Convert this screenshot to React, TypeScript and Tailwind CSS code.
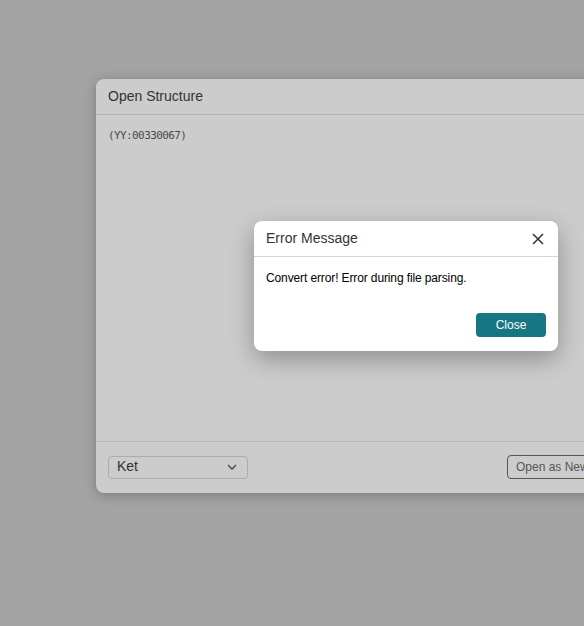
import React from "react";

export default function App() {
  return (
    <div className="relative w-[584px] h-[626px] overflow-hidden bg-[#a3a3a3]" style={{ fontFamily: "'Liberation Sans', Arial, sans-serif" }}>
      {/* Open Structure dialog (dimmed) */}
      <div className="absolute left-[96px] top-[79px] w-[560px] h-[414px] rounded-lg bg-[#cccccc] shadow-[0_2px_12px_rgba(0,0,0,0.25)] flex flex-col">
        <div className="h-[36px] flex items-center px-3 border-b border-[#aeb2b9] text-[14px] text-[#333333]">
          Open Structure
        </div>
        <div className="flex-1 px-3 pt-[13px] text-[11px] tracking-[-0.6px] text-[#4a4a4a]" style={{ fontFamily: "'DejaVu Sans Mono', monospace" }}>
          (YY:00330067)
        </div>
        <div className="h-[52px] border-t border-[#b5b8bd] flex items-center pl-3 pb-[1px]">
          <div className="w-[140px] h-[23px] border border-[#a9acb2] rounded-[4px] flex items-center justify-between pl-[8px] pr-[10px] text-[14px] text-[#333333]">
            <span className="-mt-[1px]">Ket</span>
            <svg width="10" height="6" viewBox="0 0 10 6" fill="none" stroke="#444" strokeWidth="1.3"><path d="M1 1l4 4 4-4" /></svg>
          </div>
          <div className="ml-[259px] h-[24px] w-[100px] border border-[#555] rounded-[4px] flex items-center pl-[8px] text-[12px] text-[#555555] whitespace-nowrap">
            Open as New
          </div>
        </div>
      </div>

      {/* Error dialog */}
      <div className="absolute left-[254px] top-[221px] w-[304px] h-[130px] rounded-lg bg-white shadow-[0_8px_24px_rgba(0,0,0,0.3)] flex flex-col">
        <div className="h-[36px] flex items-center justify-between px-3 border-b border-[#cad6e0] text-[14px] text-[#333333]">
          <span>Error Message</span>
          <svg width="12" height="12" viewBox="0 0 12 12" stroke="#333" strokeWidth="1.5" className="mr-[2px]"><path d="M1 1l10 10M11 1L1 11" /></svg>
        </div>
        <div className="px-3 pt-[12px] text-[12px] tracking-[-0.12px] text-black flex-1">
          Convert error! Error during file parsing.
        </div>
        <div className="flex justify-end px-3 pb-[14px]">
          <div className="w-[70px] h-[24px] rounded-[4px] bg-[#167782] text-white text-[12px] flex items-center justify-center">
            Close
          </div>
        </div>
      </div>
    </div>
  );
}
